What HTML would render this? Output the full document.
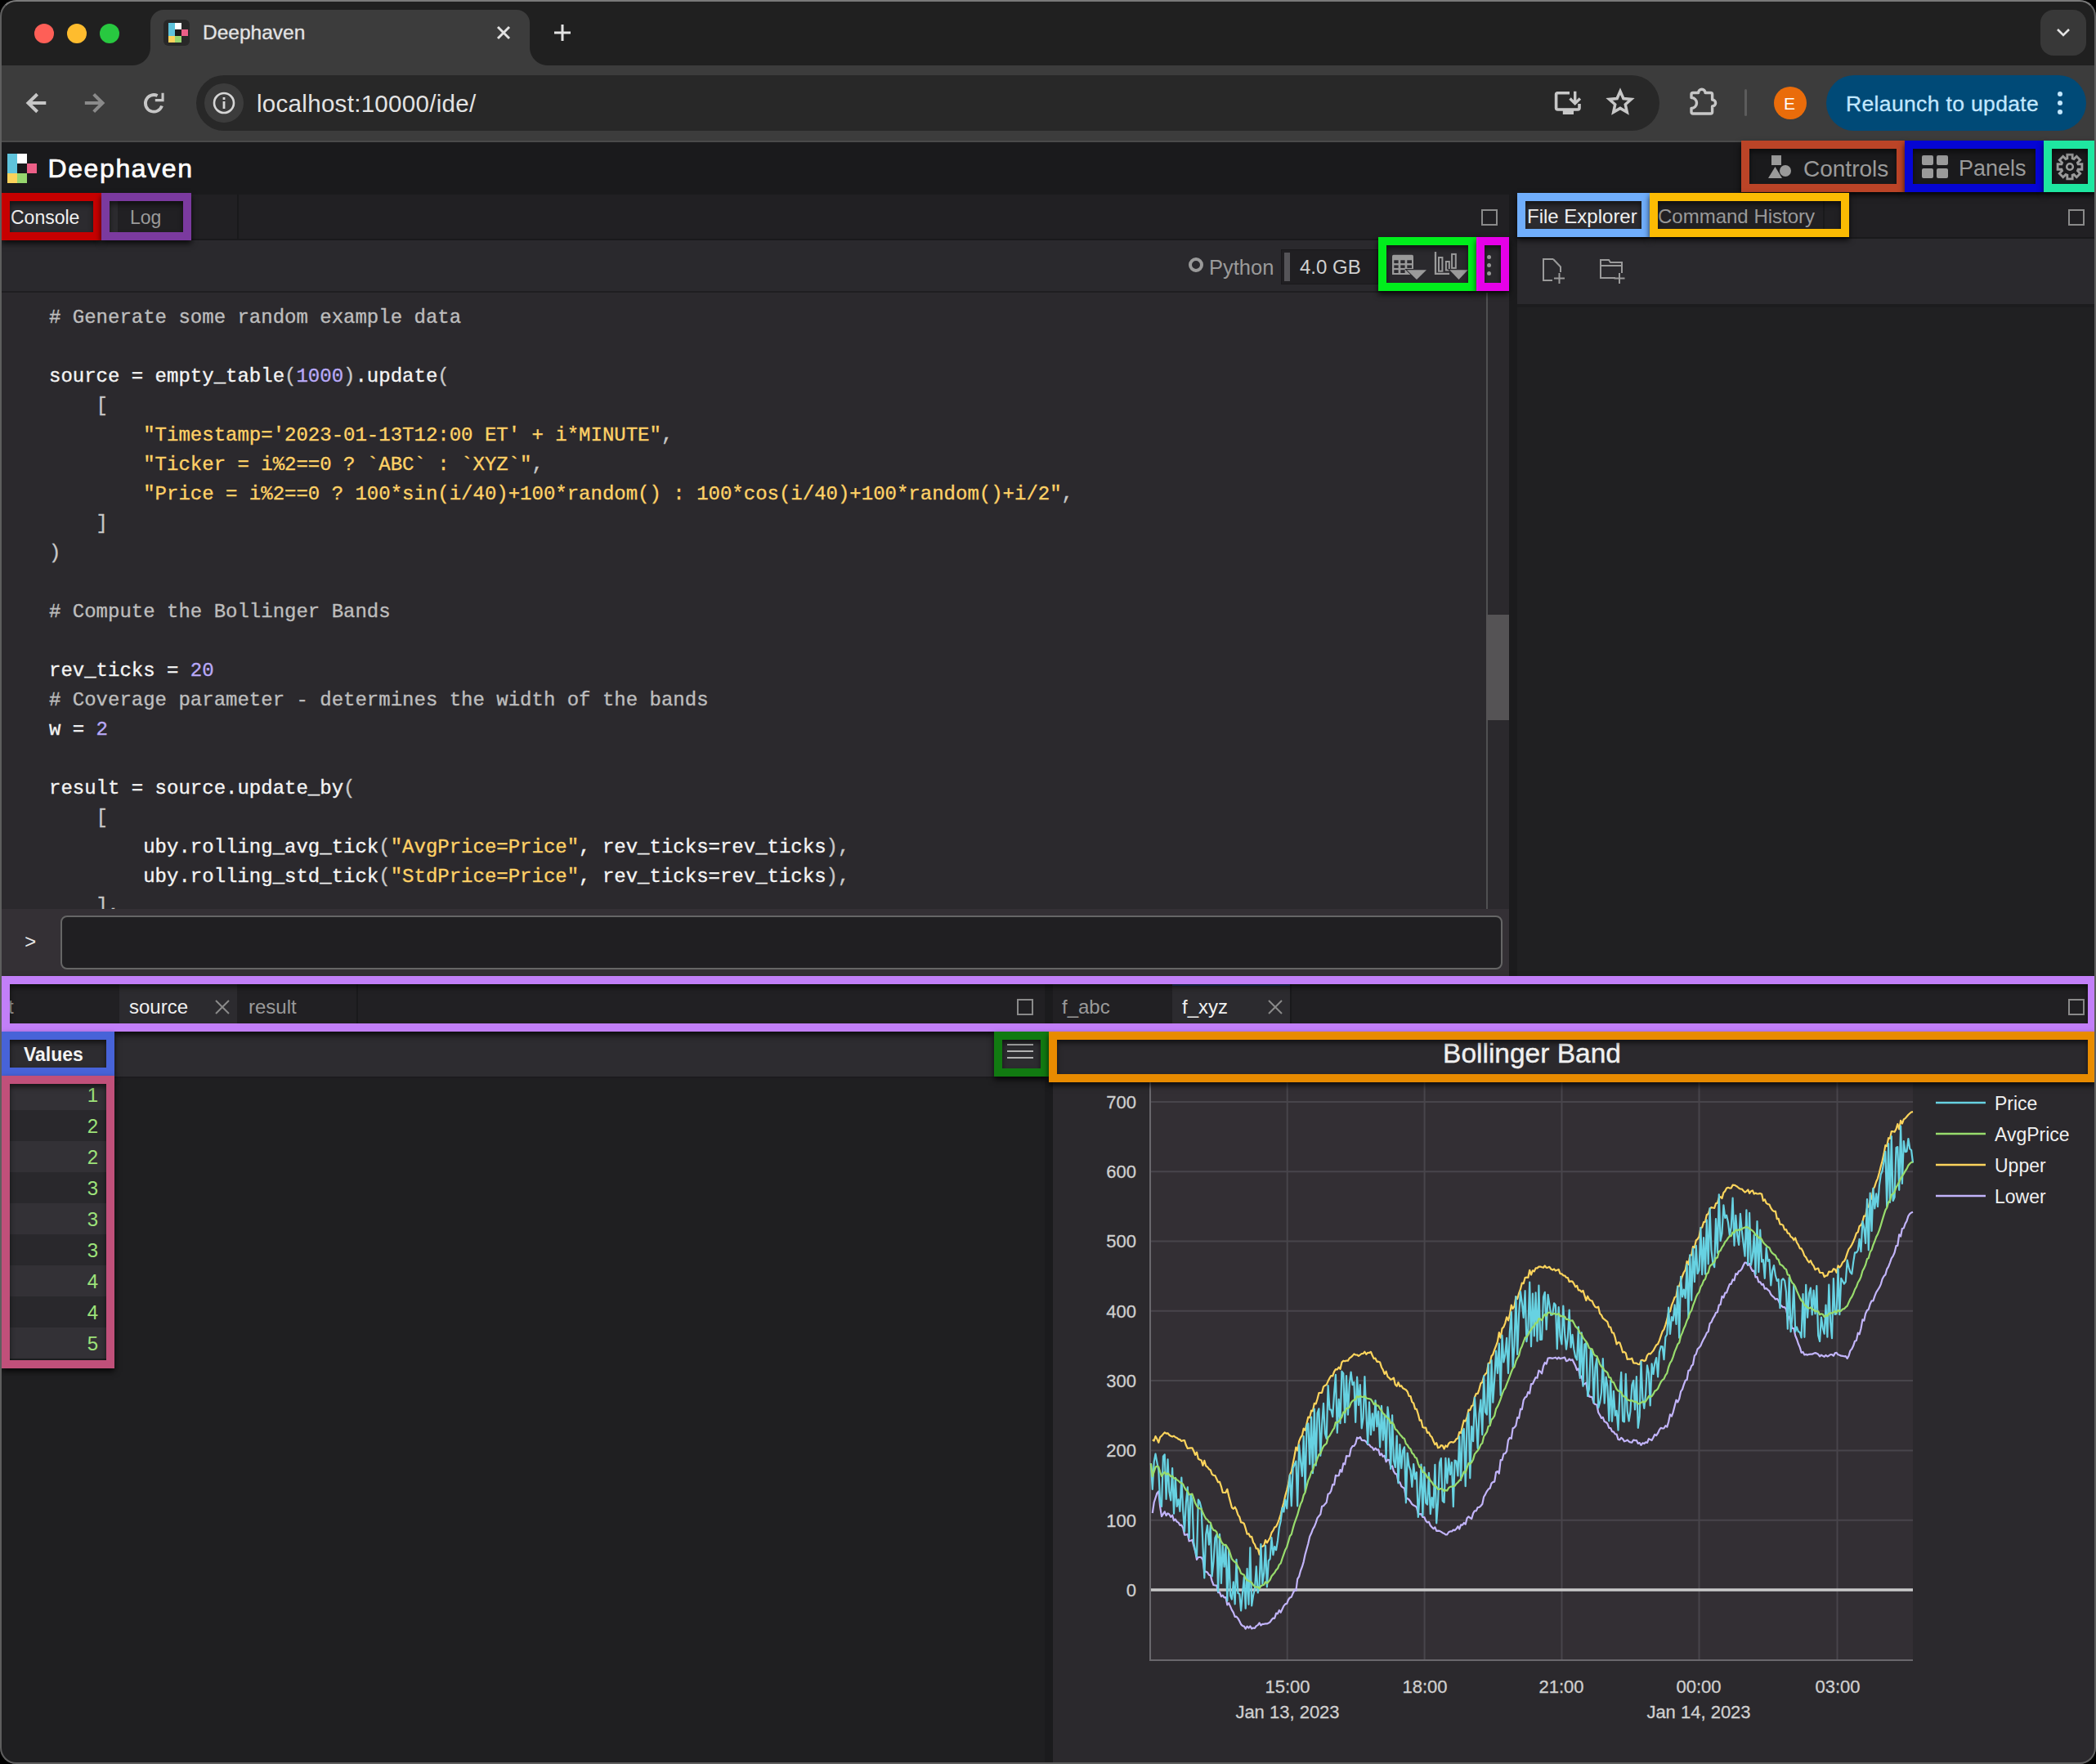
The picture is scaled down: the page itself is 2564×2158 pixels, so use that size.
<!DOCTYPE html>
<html><head><meta charset="utf-8">
<style>
*{box-sizing:border-box;margin:0;padding:0}
html,body{width:2564px;height:2158px;overflow:hidden;background:#000}
body{font-family:"Liberation Sans",sans-serif;position:relative}
.a{position:absolute}
#win{position:absolute;left:0;top:0;width:2564px;height:2158px;border-radius:20px;overflow:hidden;background:#1a1a1c}
#frame{position:absolute;left:0;top:0;width:2564px;height:2158px;border-radius:20px;border:2px solid #5e5e5e;border-top-color:#7a7a7a;pointer-events:none;z-index:50}
.mono{font-family:"Liberation Mono",monospace}
.ann{position:absolute;border:10px solid;background:transparent;box-shadow:0 4px 7px rgba(0,0,0,.75),inset 0 4px 6px rgba(0,0,0,.55);z-index:20}
.txt{position:absolute;white-space:pre;line-height:1}
.cl{position:absolute;left:60px;margin-top:3px;height:36px;line-height:36px;font-size:24px;white-space:pre;-webkit-text-stroke-width:0.35px}
</style></head><body>
<div id="win">
<!-- ===== CHROME TAB STRIP ===== -->
<div class="a" style="left:0;top:0;width:2564px;height:80px;background:#202020"></div>
<div class="a" style="left:42px;top:29px;width:24px;height:24px;border-radius:50%;background:#fe5f57"></div>
<div class="a" style="left:82px;top:29px;width:24px;height:24px;border-radius:50%;background:#febc2e"></div>
<div class="a" style="left:122px;top:29px;width:24px;height:24px;border-radius:50%;background:#28c840"></div>
<!-- active tab -->
<div class="a" style="left:184px;top:12px;width:464px;height:70px;background:#3c3c3c;border-radius:16px 16px 0 0"></div>
<div class="a" style="left:162px;top:58px;width:22px;height:22px;background:radial-gradient(circle at 0 0,#202020 21.5px,#3c3c3c 22.5px)"></div>
<div class="a" style="left:648px;top:58px;width:22px;height:22px;background:radial-gradient(circle at 100% 0,#202020 21.5px,#3c3c3c 22.5px)"></div>
<!-- favicon -->
<div class="a" style="left:200px;top:24px;width:32px;height:32px;border-radius:6px;background:#282828"></div>
<div class="a" style="left:206px;top:28px;width:8px;height:16px;background:#5fc4dc"></div>
<div class="a" style="left:214px;top:28px;width:8px;height:8px;background:#fff"></div>
<div class="a" style="left:214px;top:36px;width:8px;height:8px;background:#1a1a1a"></div>
<div class="a" style="left:222px;top:36px;width:8px;height:8px;background:#ec5f87"></div>
<div class="a" style="left:206px;top:44px;width:8px;height:8px;background:#fbd25b"></div>
<div class="a" style="left:214px;top:44px;width:8px;height:8px;background:#97d66e"></div>
<div class="txt" style="left:248px;top:28px;font-size:24.5px;color:#e3e3e3;-webkit-text-stroke:0.3px #e3e3e3">Deephaven</div>
<svg class="a" style="left:606px;top:30px" width="20" height="20" viewBox="0 0 20 20"><path d="M3 3L17 17M17 3L3 17" stroke="#e3e3e3" stroke-width="2.9"/></svg>
<svg class="a" style="left:676px;top:28px" width="24" height="24" viewBox="0 0 24 24"><path d="M12 2V22M2 12H22" stroke="#e3e3e3" stroke-width="3"/></svg>
<!-- dropdown -->
<div class="a" style="left:2496px;top:12px;width:56px;height:56px;border-radius:16px;background:#383838"></div>
<svg class="a" style="left:2512px;top:30px" width="24" height="20" viewBox="0 0 24 20"><path d="M5 6L12 13L19 6" stroke="#e3e3e3" stroke-width="2.6" fill="none"/></svg>

<!-- ===== CHROME TOOLBAR ===== -->
<div class="a" style="left:0;top:80px;width:2564px;height:94px;background:#3c3c3c;border-bottom:2px solid #4a4a4a"></div>
<svg class="a" style="left:28px;top:110px" width="32" height="32" viewBox="0 0 32 32"><path d="M6 16H28.3M17.6 5.3L6.5 16L17.6 26.7" stroke="#c7c7c7" stroke-width="4" fill="none"/></svg>
<svg class="a" style="left:100px;top:110px" width="32" height="32" viewBox="0 0 32 32"><path d="M3.8 16H26M14.7 5.3L25.5 16L14.7 26.7" stroke="#8a8a8a" stroke-width="4" fill="none"/></svg>
<svg class="a" style="left:172px;top:110px" width="34" height="32" viewBox="0 0 34 32"><path d="M20.6 7A10.3 10.3 0 1 0 26 19.5" stroke="#c7c7c7" stroke-width="3.8" fill="none"/><path d="M17.8 11H25.5V3.8H28.6V14.3H17.8Z" fill="#c7c7c7"/></svg>
<div class="a" style="left:240px;top:92px;width:1790px;height:68px;border-radius:34px;background:#282828"></div>
<div class="a" style="left:250px;top:102px;width:48px;height:48px;border-radius:50%;background:#3c3c3c"></div>
<svg class="a" style="left:260px;top:112px" width="28" height="28" viewBox="0 0 28 28"><circle cx="14" cy="14" r="12" stroke="#d6d6d6" stroke-width="2.6" fill="none"/><rect x="12.6" y="12" width="2.8" height="9" fill="#d6d6d6"/><rect x="12.6" y="7" width="2.8" height="3" fill="#d6d6d6"/></svg>
<div class="txt" style="left:314px;top:112px;font-size:29.5px;letter-spacing:0.3px;color:#e3e3e3">localhost:10000/ide/</div>
<!-- install -->
<svg class="a" style="left:1898px;top:108px" width="40" height="36" viewBox="0 0 40 36"><path d="M22 5.7H7.5Q5.6 5.7 5.6 7.6V24.1Q5.6 26 7.5 26H32.1Q34 26 34 24.1V19" stroke="#c7c7c7" stroke-width="3.6" fill="none"/><rect x="13.8" y="27" width="13.2" height="5" fill="#c7c7c7"/><path d="M28.7 3.8V18M22.5 12.5L28.7 18.7L34.9 12.5" stroke="#c7c7c7" stroke-width="3.4" fill="none"/></svg>
<svg class="a" style="left:1963px;top:106px" width="40" height="40" viewBox="0 0 40 40"><path d="M19.0 5.6L22.9 14.5L32.5 15.4L25.3 21.8L27.3 31.3L19.0 26.4L10.7 31.3L12.7 21.8L5.5 15.4L15.1 14.5Z" stroke="#c7c7c7" stroke-width="3.5" fill="none" stroke-linejoin="miter"/></svg>
<svg class="a" style="left:2064px;top:106px" width="40" height="40" viewBox="0 0 40 40"><path d="M5 9.5Q5 7.5 7 7.5H13.6A4.2 4.2 0 0 1 22 7.5H28.6Q30.6 7.5 30.6 9.5V16A4 4 0 0 1 30.6 24V31Q30.6 33 28.6 33H7Q5 33 5 31V26.5A6.5 6.5 0 0 0 5 13.5Z" stroke="#c7c7c7" stroke-width="3.4" fill="none" stroke-linejoin="round"/></svg>
<div class="a" style="left:2134px;top:109px;width:3px;height:33px;border-radius:2px;background:#5c5c5c"></div>
<div class="a" style="left:2170px;top:106px;width:40px;height:40px;border-radius:50%;background:#ea6c0a"></div>
<div class="txt" style="left:2182px;top:116px;font-size:21px;color:#fff">E</div>
<div class="a" style="left:2234px;top:92px;width:318px;height:68px;border-radius:34px;background:#004a77"></div>
<div class="txt" style="left:2258px;top:113.5px;font-size:26.5px;letter-spacing:0.35px;color:#c2e7ff;-webkit-text-stroke:0.3px #c2e7ff">Relaunch to update</div>
<div class="a" style="left:2517px;top:112px;width:6px;height:6px;border-radius:50%;background:#c2e7ff"></div>
<div class="a" style="left:2517px;top:123px;width:6px;height:6px;border-radius:50%;background:#c2e7ff"></div>
<div class="a" style="left:2517px;top:134px;width:6px;height:6px;border-radius:50%;background:#c2e7ff"></div>

<!-- ===== DH HEADER ===== -->
<div class="a" style="left:0;top:174px;width:2564px;height:64px;background:#1a1a1c"></div>
<div class="a" style="left:9px;top:188px;width:12px;height:24px;background:#5fc4dc"></div>
<div class="a" style="left:21px;top:188px;width:12px;height:12px;background:#fff"></div>
<div class="a" style="left:33px;top:200px;width:12px;height:12px;background:#ec5f87"></div>
<div class="a" style="left:9px;top:212px;width:12px;height:12px;background:#fbd25b"></div>
<div class="a" style="left:21px;top:212px;width:12px;height:12px;background:#97d66e"></div>
<div class="txt" style="left:58.5px;top:189.5px;font-size:32px;color:#fff;letter-spacing:1.6px;-webkit-text-stroke:0.7px #fff">Deephaven</div>


<!-- DH header right -->
<svg class="a" style="left:2163px;top:190px" width="30" height="28" viewBox="0 0 30 28"><rect x="4" y="0" width="12" height="12" fill="#9a9a9a"/><path d="M0 28L8.5 14L17 28Z" fill="#9a9a9a"/><circle cx="21" cy="19" r="7" fill="#9a9a9a"/></svg>
<div class="txt" style="left:2206px;top:193px;font-size:28px;color:#9a9a9a">Controls</div>
<svg class="a" style="left:2351px;top:190px" width="32" height="28" viewBox="0 0 32 28"><rect x="0" y="0" width="14" height="12" rx="2" fill="#9a9a9a"/><rect x="18" y="0" width="14" height="12" rx="2" fill="#9a9a9a"/><rect x="0" y="16" width="14" height="12" rx="2" fill="#9a9a9a"/><rect x="18" y="16" width="14" height="12" rx="2" fill="#9a9a9a"/></svg>
<div class="txt" style="left:2396px;top:193px;font-size:27px;color:#9a9a9a">Panels</div>
<svg class="a" style="left:2514px;top:186px" width="36" height="36" viewBox="0 0 36 36"><path d="M14.9 7.9L14.8 3.1L21.2 3.1L21.1 7.9L23.0 8.6L26.3 5.3L30.7 9.7L27.4 13.0L28.1 14.9L32.9 14.8L32.9 21.2L28.1 21.1L27.4 23.0L30.7 26.3L26.3 30.7L23.0 27.4L21.1 28.1L21.2 32.9L14.8 32.9L14.9 28.1L13.0 27.4L9.7 30.7L5.3 26.3L8.6 23.0L7.9 21.1L3.1 21.2L3.1 14.8L7.9 14.9L8.6 13.0L5.3 9.7L9.7 5.3L13.0 8.6Z" stroke="#9a9a9a" stroke-width="2.8" fill="none" stroke-linejoin="miter"/><circle cx="18" cy="18" r="3.8" stroke="#9a9a9a" stroke-width="2.6" fill="none"/></svg>

<!-- ===== CONSOLE PANEL ===== -->
<div class="a" style="left:0;top:238px;width:1846px;height:56px;background:#212023;border-bottom:2px solid #19191b"></div>
<div class="a" style="left:0;top:238px;width:144px;height:54px;background:#2c2b2f"></div>
<div class="a" style="left:290px;top:238px;width:2px;height:54px;background:#19191b"></div>
<div class="txt" style="left:13px;top:255px;font-size:23px;color:#f0f0f0">Console</div>
<div class="txt" style="left:159px;top:255px;font-size:23px;color:#9a9a9a">Log</div>
<div class="a" style="left:1812px;top:256px;width:20px;height:20px;border:2px solid #8a8a8a"></div>
<!-- toolbar -->
<div class="a" style="left:0;top:294px;width:1846px;height:64px;background:#2a292d;border-bottom:2px solid #1f1e21"></div>
<div class="a" style="left:1454px;top:315px;width:18px;height:18px;border-radius:50%;border:4px solid #9a9a9a"></div>
<div class="txt" style="left:1479px;top:314.5px;font-size:25.5px;color:#9a9a9a">Python</div>
<div class="a" style="left:1567px;top:305px;width:119px;height:43px;background:#201f22;border:1px solid #19181b"></div>
<div class="a" style="left:1571px;top:309px;width:7px;height:35px;background:#555458"></div>
<div class="txt" style="left:1590px;top:314.5px;font-size:24px;color:#d0d0d0">4.0 GB</div>
<svg class="a" style="left:1700px;top:306px" width="100" height="40" viewBox="0 0 100 40"><path d="M3 7.5Q3 5.8 4.7 5.8H27.3Q29 5.8 29 7.5V30H3Z" fill="#9a9a9a"/><g fill="#2b2a2e"><rect x="5.3" y="12.3" width="5.3" height="3.8"/><rect x="13.3" y="12.3" width="5.3" height="3.8"/><rect x="21.3" y="12.3" width="5.7" height="3.8"/><rect x="5.3" y="18.4" width="5.3" height="3.5"/><rect x="13.3" y="18.4" width="5.3" height="3.5"/><rect x="21.3" y="18.4" width="5.7" height="3.5"/><rect x="5.3" y="24.2" width="5.3" height="3.8"/><rect x="13.3" y="24.2" width="5.3" height="3.8"/></g><path d="M20.9 24.2H45L33 36Z" fill="#9a9a9a" stroke="#2b2a2e" stroke-width="2.2" paint-order="stroke"/><path d="M56 2V28.8H73" stroke="#9a9a9a" stroke-width="2.3" fill="none"/><rect x="60" y="9" width="4.4" height="16.7" stroke="#9a9a9a" stroke-width="2" fill="none"/><rect x="68.9" y="14" width="3.9" height="10.5" stroke="#9a9a9a" stroke-width="2" fill="none"/><rect x="76.1" y="4.9" width="4.7" height="17" stroke="#9a9a9a" stroke-width="2" fill="none"/><path d="M73.2 24.2H95.7L84.5 36Z" fill="#9a9a9a" stroke="#2b2a2e" stroke-width="2.2" paint-order="stroke"/></svg>
<div class="a" style="left:1819px;top:312px;width:5px;height:5px;border-radius:50%;background:#9a9a9a"></div>
<div class="a" style="left:1819px;top:322px;width:5px;height:5px;border-radius:50%;background:#9a9a9a"></div>
<div class="a" style="left:1819px;top:332px;width:5px;height:5px;border-radius:50%;background:#9a9a9a"></div>
<!-- code -->
<div class="a" style="left:0;top:358px;width:1846px;height:754px;background:#2b292d;overflow:hidden" id="code">
</div>
<div class="a mono" style="left:0;top:358px;width:1818px;height:754px;overflow:hidden">
<div style="position:relative;top:-358px">
<div class="cl" style="top:368px"><span style="color:#bdbdbd"># Generate some random example data</span></div>
<div class="cl" style="top:404px"></div>
<div class="cl" style="top:440px"><span style="color:#f4f4f4">source = empty_table</span><span style="color:#c8c8c8">(</span><span style="color:#b8a8f6">1000</span><span style="color:#c8c8c8">)</span><span style="color:#f4f4f4">.update</span><span style="color:#c8c8c8">(</span></div>
<div class="cl" style="top:476px"><span style="color:#f4f4f4">    </span><span style="color:#c8c8c8">[</span></div>
<div class="cl" style="top:512px"><span style="color:#f4f4f4">        </span><span style="color:#ffd166">&quot;Timestamp=&#x27;2023-01-13T12:00 ET&#x27; + i*MINUTE&quot;</span><span style="color:#c8c8c8">,</span></div>
<div class="cl" style="top:548px"><span style="color:#f4f4f4">        </span><span style="color:#ffd166">&quot;Ticker = i%2==0 ? `ABC` : `XYZ`&quot;</span><span style="color:#c8c8c8">,</span></div>
<div class="cl" style="top:584px"><span style="color:#f4f4f4">        </span><span style="color:#ffd166">&quot;Price = i%2==0 ? 100*sin(i/40)+100*random() : 100*cos(i/40)+100*random()+i/2&quot;</span><span style="color:#c8c8c8">,</span></div>
<div class="cl" style="top:620px"><span style="color:#f4f4f4">    </span><span style="color:#c8c8c8">]</span></div>
<div class="cl" style="top:656px"><span style="color:#c8c8c8">)</span></div>
<div class="cl" style="top:692px"></div>
<div class="cl" style="top:728px"><span style="color:#bdbdbd"># Compute the Bollinger Bands</span></div>
<div class="cl" style="top:764px"></div>
<div class="cl" style="top:800px"><span style="color:#f4f4f4">rev_ticks = </span><span style="color:#b8a8f6">20</span></div>
<div class="cl" style="top:836px"><span style="color:#bdbdbd"># Coverage parameter - determines the width of the bands</span></div>
<div class="cl" style="top:872px"><span style="color:#f4f4f4">w = </span><span style="color:#b8a8f6">2</span></div>
<div class="cl" style="top:908px"></div>
<div class="cl" style="top:944px"><span style="color:#f4f4f4">result = source.update_by</span><span style="color:#c8c8c8">(</span></div>
<div class="cl" style="top:980px"><span style="color:#f4f4f4">    </span><span style="color:#c8c8c8">[</span></div>
<div class="cl" style="top:1016px"><span style="color:#f4f4f4">        uby.rolling_avg_tick</span><span style="color:#c8c8c8">(</span><span style="color:#ffd166">&quot;AvgPrice=Price&quot;</span><span style="color:#f4f4f4">, rev_ticks=rev_ticks</span><span style="color:#c8c8c8">),</span></div>
<div class="cl" style="top:1052px"><span style="color:#f4f4f4">        uby.rolling_std_tick</span><span style="color:#c8c8c8">(</span><span style="color:#ffd166">&quot;StdPrice=Price&quot;</span><span style="color:#f4f4f4">, rev_ticks=rev_ticks</span><span style="color:#c8c8c8">),</span></div>
<div class="cl" style="top:1088px"><span style="color:#f4f4f4">    </span><span style="color:#c8c8c8">],</span></div>
</div></div>
<div class="a" style="left:1818px;top:358px;width:2px;height:754px;background:#505052"></div>
<div class="a" style="left:1818px;top:752px;width:28px;height:129px;background:#555355"></div>
<!-- input row -->
<div class="a" style="left:0;top:1112px;width:1846px;height:82px;background:#343035"></div>
<div class="txt mono" style="left:30px;top:1142px;font-size:24px;color:#e8e8e8">&gt;</div>
<div class="a" style="left:74px;top:1120px;width:1764px;height:66px;border-radius:8px;border:2px solid #666;background:#201f22"></div>
<div class="a" style="left:1846px;top:238px;width:10px;height:956px;background:#1b1b1d"></div>

<!-- ===== RIGHT PANEL ===== -->
<div class="a" style="left:1856px;top:238px;width:708px;height:54px;background:#212023;border-bottom:2px solid #19191b"></div>
<div class="a" style="left:1856px;top:238px;width:162px;height:52px;background:#2c2b2f"></div>
<div class="a" style="left:2230px;top:238px;width:2px;height:52px;background:#19191b"></div>
<div class="txt" style="left:1868px;top:253px;font-size:24px;color:#f0f0f0">File Explorer</div>
<div class="txt" style="left:2028px;top:253px;font-size:24px;color:#9a9a9a">Command History</div>
<div class="a" style="left:2530px;top:256px;width:20px;height:20px;border:2px solid #8a8a8a"></div>
<div class="a" style="left:1856px;top:292px;width:708px;height:80px;background:#2a292d"></div>
<svg class="a" style="left:1884px;top:314px" width="36" height="36" viewBox="0 0 36 36"><path d="M16 3H4V29H15" stroke="#9a9a9a" stroke-width="2" fill="none"/><path d="M16 3L25 12.5V19" stroke="#9a9a9a" stroke-width="2" fill="none"/><path d="M23.5 20V33M17 26.5H30" stroke="#9a9a9a" stroke-width="2"/></svg>
<svg class="a" style="left:1954px;top:314px" width="40" height="36" viewBox="0 0 40 36"><path d="M22 26H4V4H14L16 7H30V20" stroke="#9a9a9a" stroke-width="2" fill="none"/><path d="M4 11H30" stroke="#9a9a9a" stroke-width="2"/><path d="M27 20V33M20.5 26.5H33.5" stroke="#9a9a9a" stroke-width="2"/></svg>
<div class="a" style="left:1856px;top:372px;width:708px;height:4px;background:#1c1c1e"></div>
<div class="a" style="left:1856px;top:376px;width:708px;height:818px;background:#202022"></div>


<!-- ===== BOTTOM LEFT TABLE PANEL ===== -->
<div class="a" style="left:0;top:1194px;width:1278px;height:964px;background:#1f1f21"></div>
<div class="a" style="left:0;top:1196px;width:1278px;height:58px;background:#212023;border-bottom:2px solid #19191b"></div>
<div class="a" style="left:146px;top:1196px;width:144px;height:56px;background:#2c2b2f"></div>
<div class="a" style="left:436px;top:1196px;width:2px;height:56px;background:#19191b"></div>
<div class="txt" style="left:10px;top:1220px;font-size:24px;color:#9a9a9a">t</div>
<div class="txt" style="left:158px;top:1220px;font-size:24px;color:#f0f0f0">source</div>
<svg class="a" style="left:262px;top:1222px" width="20" height="20" viewBox="0 0 20 20"><path d="M2 2L18 18M18 2L2 18" stroke="#8a8a8a" stroke-width="2"/></svg>
<div class="txt" style="left:304px;top:1220px;font-size:24px;color:#9a9a9a">result</div>
<div class="a" style="left:1244px;top:1222px;width:20px;height:20px;border:2px solid #8a8a8a"></div>
<div class="a" style="left:0;top:1262px;width:1278px;height:57px;background:#2d2c30;border-bottom:2px solid #1c1b1e"></div>
<div class="txt" style="left:29px;top:1279px;font-size:23px;font-weight:bold;color:#f4f4f4">Values</div>
<div class="a" style="left:1232px;top:1277px;width:32px;height:2px;background:#b0b0b0"></div>
<div class="a" style="left:1232px;top:1285px;width:32px;height:2px;background:#b0b0b0"></div>
<div class="a" style="left:1232px;top:1293px;width:32px;height:2px;background:#b0b0b0"></div>
<div class="a" style="left:0;top:1320px;width:136px;height:38px;background:#333136"></div>
<div class="txt" style="left:0;top:1328px;width:120px;text-align:right;font-size:24px;color:#9de27a">1</div>
<div class="a" style="left:0;top:1358px;width:136px;height:38px;background:#29282c"></div>
<div class="txt" style="left:0;top:1366px;width:120px;text-align:right;font-size:24px;color:#9de27a">2</div>
<div class="a" style="left:0;top:1396px;width:136px;height:38px;background:#333136"></div>
<div class="txt" style="left:0;top:1404px;width:120px;text-align:right;font-size:24px;color:#9de27a">2</div>
<div class="a" style="left:0;top:1434px;width:136px;height:38px;background:#29282c"></div>
<div class="txt" style="left:0;top:1442px;width:120px;text-align:right;font-size:24px;color:#9de27a">3</div>
<div class="a" style="left:0;top:1472px;width:136px;height:38px;background:#333136"></div>
<div class="txt" style="left:0;top:1480px;width:120px;text-align:right;font-size:24px;color:#9de27a">3</div>
<div class="a" style="left:0;top:1510px;width:136px;height:38px;background:#29282c"></div>
<div class="txt" style="left:0;top:1518px;width:120px;text-align:right;font-size:24px;color:#9de27a">3</div>
<div class="a" style="left:0;top:1548px;width:136px;height:38px;background:#333136"></div>
<div class="txt" style="left:0;top:1556px;width:120px;text-align:right;font-size:24px;color:#9de27a">4</div>
<div class="a" style="left:0;top:1586px;width:136px;height:38px;background:#29282c"></div>
<div class="txt" style="left:0;top:1594px;width:120px;text-align:right;font-size:24px;color:#9de27a">4</div>
<div class="a" style="left:0;top:1624px;width:136px;height:38px;background:#333136"></div>
<div class="txt" style="left:0;top:1632px;width:120px;text-align:right;font-size:24px;color:#9de27a">5</div>

<div class="a" style="left:1278px;top:1194px;width:10px;height:964px;background:#1b1b1d"></div>

<!-- ===== CHART PANEL ===== -->
<div class="a" style="left:1288px;top:1196px;width:1276px;height:58px;background:#212023;border-bottom:2px solid #19191b"></div>
<div class="a" style="left:1434px;top:1204px;width:144px;height:48px;background:#2c2b2f;border-top:2px solid #1e3a6e"></div>
<div class="a" style="left:1578px;top:1196px;width:2px;height:56px;background:#19191b"></div>
<div class="txt" style="left:1299px;top:1220px;font-size:24px;color:#9a9a9a">f_abc</div>
<div class="txt" style="left:1446px;top:1220px;font-size:24px;color:#f0f0f0">f_xyz</div>
<svg class="a" style="left:1550px;top:1222px" width="20" height="20" viewBox="0 0 20 20"><path d="M2 2L18 18M18 2L2 18" stroke="#8a8a8a" stroke-width="2"/></svg>
<div class="a" style="left:2530px;top:1222px;width:20px;height:20px;border:2px solid #8a8a8a"></div>
<div class="a" style="left:1288px;top:1262px;width:1276px;height:896px;background:#2b292d"></div>
<div class="a" style="left:1407px;top:1320px;width:933px;height:711px;background:#332f34"></div>
<div class="txt" style="left:1574px;width:600px;text-align:center;top:1272px;font-size:33.5px;color:#f0f0f0;-webkit-text-stroke:0.4px #f0f0f0">Bollinger Band</div>
<svg class="a" style="left:0;top:0" width="2564" height="2158" viewBox="0 0 2564 2158">
<path d="M1407 1859.7H2340" stroke="#48454b" stroke-width="2"/><path d="M1407 1774.4H2340" stroke="#48454b" stroke-width="2"/><path d="M1407 1689.1H2340" stroke="#48454b" stroke-width="2"/><path d="M1407 1603.8H2340" stroke="#48454b" stroke-width="2"/><path d="M1407 1518.5H2340" stroke="#48454b" stroke-width="2"/><path d="M1407 1433.2H2340" stroke="#48454b" stroke-width="2"/><path d="M1407 1347.9H2340" stroke="#48454b" stroke-width="2"/><path d="M1574.7 1324V2030" stroke="#48454b" stroke-width="2"/><path d="M1742.6 1324V2030" stroke="#48454b" stroke-width="2"/><path d="M1910.5 1324V2030" stroke="#48454b" stroke-width="2"/><path d="M2078.5 1324V2030" stroke="#48454b" stroke-width="2"/><path d="M2247.5 1324V2030" stroke="#48454b" stroke-width="2"/>
<path d="M1407 1945H2340" stroke="#c9c9c9" stroke-width="3.6"/>
<path d="M1407 1324V2031H2340" stroke="#69676c" stroke-width="2" fill="none"/>
<g fill="none" stroke-width="2.2" stroke-linejoin="round">
<path d="M1409.8,1851.0L1411.7,1838.0L1413.5,1832.5L1415.4,1826.7L1417.3,1824.4L1419.1,1842.9L1421.0,1855.2L1422.9,1852.1L1424.7,1849.3L1426.6,1854.0L1428.5,1851.3L1430.3,1852.5L1432.2,1855.8L1434.1,1853.6L1436.0,1860.3L1437.8,1858.6L1439.7,1861.6L1441.6,1862.6L1443.4,1865.8L1445.3,1865.7L1447.2,1869.1L1449.0,1877.6L1450.9,1877.6L1452.8,1876.8L1454.6,1885.3L1456.5,1884.7L1458.4,1884.0L1460.2,1890.8L1462.1,1897.6L1464.0,1908.0L1465.8,1905.0L1467.7,1905.0L1469.6,1905.3L1471.4,1908.2L1473.3,1922.3L1475.2,1922.7L1477.0,1923.6L1478.9,1926.6L1480.8,1927.2L1482.6,1934.1L1484.5,1939.0L1486.4,1939.5L1488.3,1939.5L1490.1,1948.2L1492.0,1948.0L1493.9,1953.2L1495.7,1951.6L1497.6,1954.3L1499.5,1954.0L1501.3,1963.4L1503.2,1961.1L1505.1,1965.4L1506.9,1969.7L1508.8,1972.7L1510.7,1978.0L1512.5,1977.7L1514.4,1979.9L1516.3,1983.3L1518.1,1987.1L1520.0,1989.0L1521.9,1989.6L1523.7,1992.6L1525.6,1989.6L1527.5,1991.6L1529.3,1989.4L1531.2,1992.4L1533.1,1991.5L1534.9,1991.8L1536.8,1989.1L1538.7,1988.1L1540.6,1985.3L1542.4,1988.4L1544.3,1986.9L1546.2,1986.8L1548.0,1986.4L1549.9,1986.4L1551.8,1985.6L1553.6,1984.4L1555.5,1981.6L1557.4,1979.6L1559.2,1979.8L1561.1,1973.6L1563.0,1974.2L1564.8,1969.8L1566.7,1972.5L1568.6,1968.5L1570.4,1964.6L1572.3,1962.4L1574.2,1961.8L1576.0,1957.0L1577.9,1954.5L1579.8,1953.7L1581.6,1949.2L1583.5,1945.4L1585.4,1945.8L1587.2,1931.7L1589.1,1928.7L1591.0,1921.5L1592.9,1916.7L1594.7,1910.6L1596.6,1901.6L1598.5,1894.8L1600.3,1888.2L1602.2,1879.7L1604.1,1875.8L1605.9,1870.8L1607.8,1867.6L1609.7,1862.9L1611.5,1857.1L1613.4,1854.7L1615.3,1852.6L1617.1,1842.7L1619.0,1842.2L1620.9,1839.9L1622.7,1837.9L1624.6,1827.7L1626.5,1827.0L1628.3,1823.7L1630.2,1816.0L1632.1,1816.3L1633.9,1804.8L1635.8,1805.5L1637.7,1805.2L1639.5,1798.0L1641.4,1800.6L1643.3,1790.3L1645.2,1791.4L1647.0,1781.2L1648.9,1781.4L1650.8,1781.4L1652.6,1772.3L1654.5,1769.2L1656.4,1768.8L1658.2,1766.2L1660.1,1758.7L1662.0,1759.7L1663.8,1758.1L1665.7,1761.8L1667.6,1762.1L1669.4,1762.2L1671.3,1763.9L1673.2,1767.1L1675.0,1767.3L1676.9,1769.9L1678.8,1770.7L1680.6,1773.9L1682.5,1771.6L1684.4,1773.7L1686.2,1773.4L1688.1,1780.2L1690.0,1778.3L1691.8,1781.9L1693.7,1780.8L1695.6,1788.3L1697.5,1785.7L1699.3,1786.1L1701.2,1794.2L1703.1,1793.5L1704.9,1799.9L1706.8,1802.9L1708.7,1803.6L1710.5,1813.0L1712.4,1813.3L1714.3,1818.3L1716.1,1819.6L1718.0,1820.7L1719.9,1832.3L1721.7,1833.3L1723.6,1834.5L1725.5,1837.1L1727.3,1840.2L1729.2,1841.5L1731.1,1842.4L1732.9,1843.8L1734.8,1851.2L1736.7,1852.4L1738.5,1852.2L1740.4,1856.0L1742.3,1856.0L1744.2,1860.6L1746.0,1862.5L1747.9,1861.8L1749.8,1866.2L1751.6,1868.3L1753.5,1870.3L1755.4,1868.3L1757.2,1872.8L1759.1,1872.6L1761.0,1872.9L1762.8,1873.9L1764.7,1875.2L1766.6,1876.0L1768.4,1877.4L1770.3,1877.3L1772.2,1874.2L1774.0,1873.4L1775.9,1873.5L1777.8,1871.6L1779.6,1872.1L1781.5,1870.3L1783.4,1867.3L1785.2,1870.5L1787.1,1865.3L1789.0,1865.7L1790.8,1863.0L1792.7,1864.7L1794.6,1857.3L1796.5,1855.4L1798.3,1856.8L1800.2,1858.0L1802.1,1851.4L1803.9,1848.3L1805.8,1848.4L1807.7,1844.0L1809.5,1843.9L1811.4,1842.3L1813.3,1840.0L1815.1,1831.3L1817.0,1828.1L1818.9,1824.3L1820.7,1821.8L1822.6,1820.8L1824.5,1814.6L1826.3,1813.1L1828.2,1812.6L1830.1,1800.9L1831.9,1799.9L1833.8,1802.7L1835.7,1786.0L1837.5,1786.2L1839.4,1778.5L1841.3,1778.1L1843.1,1775.3L1845.0,1761.9L1846.9,1758.9L1848.8,1759.9L1850.6,1747.3L1852.5,1746.4L1854.4,1744.0L1856.2,1734.1L1858.1,1734.8L1860.0,1723.7L1861.8,1724.1L1863.7,1713.1L1865.6,1709.6L1867.4,1708.7L1869.3,1703.0L1871.2,1704.7L1873.0,1693.0L1874.9,1693.1L1876.8,1688.7L1878.6,1685.1L1880.5,1685.6L1882.4,1676.6L1884.2,1677.8L1886.1,1680.3L1888.0,1671.2L1889.8,1667.0L1891.7,1668.6L1893.6,1661.6L1895.4,1661.2L1897.3,1661.4L1899.2,1661.8L1901.1,1661.2L1902.9,1660.7L1904.8,1662.5L1906.7,1660.6L1908.5,1662.1L1910.4,1661.6L1912.3,1661.1L1914.1,1660.6L1916.0,1665.2L1917.9,1664.5L1919.7,1662.5L1921.6,1664.1L1923.5,1663.3L1925.3,1666.9L1927.2,1670.8L1929.1,1676.0L1930.9,1674.4L1932.8,1683.5L1934.7,1683.5L1936.5,1693.9L1938.4,1693.0L1940.3,1691.5L1942.1,1702.5L1944.0,1708.4L1945.9,1708.8L1947.7,1709.4L1949.6,1716.7L1951.5,1718.0L1953.4,1718.5L1955.2,1728.0L1957.1,1731.1L1959.0,1734.9L1960.8,1733.8L1962.7,1739.1L1964.6,1739.9L1966.4,1741.6L1968.3,1746.8L1970.2,1747.0L1972.0,1751.1L1973.9,1751.6L1975.8,1754.4L1977.6,1754.6L1979.5,1761.0L1981.4,1761.3L1983.2,1758.8L1985.1,1760.4L1987.0,1763.3L1988.8,1762.7L1990.7,1761.6L1992.6,1763.6L1994.4,1764.5L1996.3,1764.6L1998.2,1761.5L2000.0,1762.1L2001.9,1762.1L2003.8,1765.9L2005.7,1765.1L2007.5,1767.8L2009.4,1765.3L2011.3,1766.1L2013.1,1764.4L2015.0,1765.0L2016.9,1760.1L2018.7,1761.1L2020.6,1762.0L2022.5,1758.5L2024.3,1754.8L2026.2,1756.2L2028.1,1753.2L2029.9,1749.1L2031.8,1746.8L2033.7,1747.5L2035.5,1747.3L2037.4,1744.2L2039.3,1745.6L2041.1,1739.5L2043.0,1730.4L2044.9,1732.6L2046.7,1727.6L2048.6,1720.1L2050.5,1712.7L2052.3,1715.4L2054.2,1711.3L2056.1,1702.4L2058.0,1699.6L2059.8,1693.9L2061.7,1688.8L2063.6,1688.0L2065.4,1676.8L2067.3,1676.1L2069.2,1670.8L2071.0,1669.3L2072.9,1658.5L2074.8,1656.4L2076.6,1650.3L2078.5,1648.7L2080.4,1646.4L2082.2,1641.9L2084.1,1638.1L2086.0,1634.9L2087.8,1630.6L2089.7,1629.0L2091.6,1619.1L2093.4,1617.7L2095.3,1613.2L2097.2,1610.2L2099.0,1606.0L2100.9,1605.2L2102.8,1596.6L2104.6,1596.0L2106.5,1585.9L2108.4,1587.5L2110.3,1581.6L2112.1,1581.3L2114.0,1575.9L2115.9,1570.9L2117.7,1570.9L2119.6,1565.4L2121.5,1566.3L2123.3,1558.2L2125.2,1559.0L2127.1,1555.0L2128.9,1554.7L2130.8,1552.2L2132.7,1547.8L2134.5,1544.5L2136.4,1544.8L2138.3,1547.9L2140.1,1545.9L2142.0,1551.4L2143.9,1555.0L2145.7,1554.6L2147.6,1562.5L2149.5,1562.2L2151.3,1568.4L2153.2,1568.3L2155.1,1571.6L2156.9,1571.0L2158.8,1576.6L2160.7,1576.0L2162.6,1577.9L2164.4,1579.3L2166.3,1583.6L2168.2,1585.7L2170.0,1587.1L2171.9,1589.5L2173.8,1588.8L2175.6,1591.0L2177.5,1595.9L2179.4,1597.6L2181.2,1599.2L2183.1,1599.2L2185.0,1601.9L2186.8,1610.4L2188.7,1610.8L2190.6,1619.0L2192.4,1625.0L2194.3,1625.0L2196.2,1634.0L2198.0,1638.2L2199.9,1644.0L2201.8,1648.4L2203.6,1654.8L2205.5,1654.0L2207.4,1657.5L2209.2,1656.9L2211.1,1657.6L2213.0,1656.8L2214.9,1656.7L2216.7,1656.7L2218.6,1655.7L2220.5,1655.1L2222.3,1655.6L2224.2,1656.8L2226.1,1659.4L2227.9,1657.6L2229.8,1658.8L2231.7,1659.8L2233.5,1657.8L2235.4,1659.5L2237.3,1658.5L2239.1,1657.0L2241.0,1657.1L2242.9,1658.7L2244.7,1655.4L2246.6,1654.8L2248.5,1657.3L2250.3,1657.7L2252.2,1658.7L2254.1,1658.9L2255.9,1659.3L2257.8,1659.1L2259.7,1661.9L2261.5,1658.7L2263.4,1652.4L2265.3,1650.2L2267.2,1646.3L2269.0,1640.7L2270.9,1639.9L2272.8,1630.7L2274.6,1632.3L2276.5,1625.2L2278.4,1614.4L2280.2,1615.7L2282.1,1606.9L2284.0,1603.0L2285.8,1601.8L2287.7,1595.2L2289.6,1591.3L2291.4,1591.3L2293.3,1585.6L2295.2,1580.8L2297.0,1578.1L2298.9,1575.2L2300.8,1571.1L2302.6,1564.8L2304.5,1561.3L2306.4,1559.4L2308.2,1552.7L2310.1,1549.7L2312.0,1544.6L2313.8,1539.3L2315.7,1536.6L2317.6,1532.3L2319.5,1524.2L2321.3,1523.9L2323.2,1510.3L2325.1,1512.6L2326.9,1503.0L2328.8,1502.5L2330.7,1496.9L2332.5,1493.7L2334.4,1487.7L2336.3,1484.9L2338.1,1483.5L2340.0,1482.8" stroke="#c2b4fa"/>
<path d="M1409.8,1761.4L1411.7,1762.5L1413.5,1757.1L1415.4,1760.6L1417.3,1764.7L1419.1,1758.3L1421.0,1756.6L1422.9,1754.4L1424.7,1752.4L1426.6,1753.7L1428.5,1753.3L1430.3,1755.5L1432.2,1756.7L1434.1,1757.6L1436.0,1756.7L1437.8,1758.3L1439.7,1759.0L1441.6,1760.6L1443.4,1761.1L1445.3,1763.0L1447.2,1762.2L1449.0,1762.2L1450.9,1768.1L1452.8,1771.9L1454.6,1771.6L1456.5,1771.3L1458.4,1771.3L1460.2,1774.9L1462.1,1779.9L1464.0,1776.6L1465.8,1784.5L1467.7,1785.8L1469.6,1786.5L1471.4,1793.0L1473.3,1786.8L1475.2,1793.3L1477.0,1794.7L1478.9,1797.2L1480.8,1798.4L1482.6,1803.5L1484.5,1804.9L1486.4,1805.1L1488.3,1809.2L1490.1,1813.2L1492.0,1812.9L1493.9,1818.6L1495.7,1825.8L1497.6,1826.0L1499.5,1825.8L1501.3,1821.8L1503.2,1830.3L1505.1,1837.4L1506.9,1844.3L1508.8,1845.9L1510.7,1843.7L1512.5,1847.1L1514.4,1853.2L1516.3,1855.9L1518.1,1862.5L1520.0,1862.6L1521.9,1864.0L1523.7,1869.6L1525.6,1876.7L1527.5,1876.2L1529.3,1880.1L1531.2,1879.9L1533.1,1886.9L1534.9,1889.3L1536.8,1894.5L1538.7,1894.5L1540.6,1901.6L1542.4,1892.1L1544.3,1891.8L1546.2,1890.8L1548.0,1884.1L1549.9,1887.4L1551.8,1884.3L1553.6,1881.2L1555.5,1875.0L1557.4,1872.4L1559.2,1868.5L1561.1,1867.5L1563.0,1863.5L1564.8,1858.5L1566.7,1852.6L1568.6,1844.5L1570.4,1838.3L1572.3,1829.5L1574.2,1823.0L1576.0,1815.2L1577.9,1804.2L1579.8,1800.3L1581.6,1790.7L1583.5,1781.1L1585.4,1770.5L1587.2,1774.6L1589.1,1763.4L1591.0,1758.7L1592.9,1756.0L1594.7,1747.6L1596.6,1749.8L1598.5,1741.4L1600.3,1733.6L1602.2,1734.3L1604.1,1725.5L1605.9,1726.3L1607.8,1716.9L1609.7,1717.4L1611.5,1711.5L1613.4,1704.0L1615.3,1703.8L1617.1,1703.8L1619.0,1696.3L1620.9,1694.9L1622.7,1694.1L1624.6,1689.6L1626.5,1685.9L1628.3,1683.0L1630.2,1683.4L1632.1,1677.9L1633.9,1675.1L1635.8,1675.3L1637.7,1672.6L1639.5,1674.8L1641.4,1666.6L1643.3,1664.7L1645.2,1665.3L1647.0,1664.5L1648.9,1664.6L1650.8,1661.5L1652.6,1660.4L1654.5,1658.6L1656.4,1656.4L1658.2,1657.5L1660.1,1657.5L1662.0,1658.9L1663.8,1657.5L1665.7,1656.0L1667.6,1655.9L1669.4,1653.7L1671.3,1656.8L1673.2,1654.9L1675.0,1655.0L1676.9,1653.8L1678.8,1658.3L1680.6,1662.1L1682.5,1661.7L1684.4,1665.8L1686.2,1665.7L1688.1,1666.6L1690.0,1672.7L1691.8,1675.8L1693.7,1680.9L1695.6,1677.7L1697.5,1684.1L1699.3,1685.6L1701.2,1687.7L1703.1,1686.9L1704.9,1685.6L1706.8,1693.7L1708.7,1695.8L1710.5,1691.2L1712.4,1696.0L1714.3,1695.2L1716.1,1698.3L1718.0,1699.3L1719.9,1700.3L1721.7,1702.5L1723.6,1707.9L1725.5,1708.1L1727.3,1715.0L1729.2,1716.6L1731.1,1723.6L1732.9,1723.9L1734.8,1730.0L1736.7,1737.7L1738.5,1737.4L1740.4,1746.0L1742.3,1746.7L1744.2,1746.6L1746.0,1753.0L1747.9,1752.4L1749.8,1756.5L1751.6,1758.1L1753.5,1763.0L1755.4,1767.2L1757.2,1765.2L1759.1,1771.3L1761.0,1770.7L1762.8,1768.1L1764.7,1768.6L1766.6,1772.5L1768.4,1768.5L1770.3,1770.0L1772.2,1765.9L1774.0,1764.4L1775.9,1764.0L1777.8,1764.7L1779.6,1763.4L1781.5,1760.2L1783.4,1759.6L1785.2,1752.0L1787.1,1753.1L1789.0,1744.6L1790.8,1737.6L1792.7,1738.6L1794.6,1733.7L1796.5,1724.7L1798.3,1725.1L1800.2,1720.1L1802.1,1719.3L1803.9,1709.5L1805.8,1704.9L1807.7,1705.0L1809.5,1699.6L1811.4,1692.2L1813.3,1691.0L1815.1,1683.8L1817.0,1681.0L1818.9,1679.1L1820.7,1667.9L1822.6,1667.4L1824.5,1658.9L1826.3,1656.9L1828.2,1651.2L1830.1,1646.3L1831.9,1641.4L1833.8,1630.1L1835.7,1636.7L1837.5,1625.3L1839.4,1623.4L1841.3,1618.6L1843.1,1611.3L1845.0,1615.4L1846.9,1608.4L1848.8,1596.6L1850.6,1601.0L1852.5,1598.2L1854.4,1586.4L1856.2,1589.0L1858.1,1582.1L1860.0,1577.0L1861.8,1569.6L1863.7,1570.2L1865.6,1563.0L1867.4,1562.7L1869.3,1563.0L1871.2,1553.8L1873.0,1559.5L1874.9,1554.3L1876.8,1555.4L1878.6,1551.4L1880.5,1551.4L1882.4,1549.6L1884.2,1549.5L1886.1,1550.3L1888.0,1550.8L1889.8,1548.5L1891.7,1550.9L1893.6,1550.6L1895.4,1549.8L1897.3,1552.5L1899.2,1553.6L1901.1,1552.4L1902.9,1554.6L1904.8,1553.8L1906.7,1553.0L1908.5,1558.1L1910.4,1558.3L1912.3,1560.3L1914.1,1560.5L1916.0,1562.8L1917.9,1563.1L1919.7,1568.0L1921.6,1567.4L1923.5,1567.6L1925.3,1570.4L1927.2,1574.3L1929.1,1572.8L1930.9,1578.5L1932.8,1578.4L1934.7,1580.5L1936.5,1578.8L1938.4,1584.8L1940.3,1590.9L1942.1,1585.7L1944.0,1589.8L1945.9,1591.0L1947.7,1591.6L1949.6,1596.1L1951.5,1599.0L1953.4,1599.6L1955.2,1598.7L1957.1,1607.0L1959.0,1608.7L1960.8,1612.7L1962.7,1614.1L1964.6,1615.7L1966.4,1617.2L1968.3,1623.5L1970.2,1623.7L1972.0,1630.3L1973.9,1630.5L1975.8,1636.4L1977.6,1644.5L1979.5,1642.2L1981.4,1642.5L1983.2,1647.8L1985.1,1654.5L1987.0,1653.9L1988.8,1655.3L1990.7,1662.9L1992.6,1662.5L1994.4,1662.7L1996.3,1661.7L1998.2,1667.4L2000.0,1667.6L2001.9,1667.6L2003.8,1668.9L2005.7,1669.1L2007.5,1664.1L2009.4,1663.8L2011.3,1665.1L2013.1,1664.2L2015.0,1658.1L2016.9,1655.9L2018.7,1656.4L2020.6,1654.4L2022.5,1652.2L2024.3,1648.7L2026.2,1645.4L2028.1,1644.2L2029.9,1639.8L2031.8,1634.2L2033.7,1628.7L2035.5,1626.4L2037.4,1620.6L2039.3,1614.1L2041.1,1605.4L2043.0,1604.4L2044.9,1596.8L2046.7,1592.3L2048.6,1587.1L2050.5,1586.0L2052.3,1573.6L2054.2,1573.4L2056.1,1566.6L2058.0,1561.2L2059.8,1556.5L2061.7,1553.7L2063.6,1543.0L2065.4,1547.0L2067.3,1535.9L2069.2,1535.5L2071.0,1525.0L2072.9,1526.3L2074.8,1517.3L2076.6,1515.9L2078.5,1512.9L2080.4,1502.2L2082.2,1501.5L2084.1,1495.1L2086.0,1494.6L2087.8,1486.2L2089.7,1485.0L2091.6,1479.1L2093.4,1477.1L2095.3,1477.5L2097.2,1477.8L2099.0,1472.3L2100.9,1471.6L2102.8,1465.2L2104.6,1464.1L2106.5,1466.0L2108.4,1459.0L2110.3,1457.1L2112.1,1453.6L2114.0,1452.8L2115.9,1453.6L2117.7,1453.5L2119.6,1449.7L2121.5,1449.8L2123.3,1450.6L2125.2,1451.8L2127.1,1453.5L2128.9,1454.5L2130.8,1454.6L2132.7,1456.7L2134.5,1458.6L2136.4,1457.3L2138.3,1455.5L2140.1,1459.8L2142.0,1457.2L2143.9,1456.4L2145.7,1460.5L2147.6,1459.5L2149.5,1460.5L2151.3,1460.4L2153.2,1459.9L2155.1,1460.8L2156.9,1468.9L2158.8,1467.3L2160.7,1471.8L2162.6,1473.1L2164.4,1473.5L2166.3,1477.9L2168.2,1480.7L2170.0,1481.9L2171.9,1481.8L2173.8,1491.2L2175.6,1490.9L2177.5,1497.7L2179.4,1497.9L2181.2,1498.9L2183.1,1504.5L2185.0,1504.0L2186.8,1508.6L2188.7,1508.9L2190.6,1513.1L2192.4,1513.9L2194.3,1517.0L2196.2,1514.5L2198.0,1520.0L2199.9,1522.9L2201.8,1527.4L2203.6,1527.4L2205.5,1531.1L2207.4,1536.3L2209.2,1538.1L2211.1,1541.9L2213.0,1544.4L2214.9,1542.1L2216.7,1546.2L2218.6,1548.6L2220.5,1553.3L2222.3,1552.1L2224.2,1551.7L2226.1,1556.9L2227.9,1557.0L2229.8,1557.1L2231.7,1562.0L2233.5,1560.7L2235.4,1560.3L2237.3,1555.5L2239.1,1555.8L2241.0,1555.7L2242.9,1552.2L2244.7,1552.8L2246.6,1556.8L2248.5,1548.4L2250.3,1550.6L2252.2,1548.4L2254.1,1544.1L2255.9,1542.9L2257.8,1539.2L2259.7,1533.2L2261.5,1528.1L2263.4,1525.9L2265.3,1522.8L2267.2,1518.7L2269.0,1514.3L2270.9,1508.7L2272.8,1507.3L2274.6,1500.1L2276.5,1498.6L2278.4,1495.0L2280.2,1487.6L2282.1,1487.6L2284.0,1477.5L2285.8,1476.4L2287.7,1468.2L2289.6,1466.2L2291.4,1455.0L2293.3,1451.4L2295.2,1445.5L2297.0,1441.6L2298.9,1434.5L2300.8,1426.7L2302.6,1420.3L2304.5,1411.6L2306.4,1401.1L2308.2,1402.2L2310.1,1392.2L2312.0,1392.8L2313.8,1384.0L2315.7,1384.2L2317.6,1384.7L2319.5,1381.2L2321.3,1375.1L2323.2,1381.4L2325.1,1370.9L2326.9,1374.6L2328.8,1369.4L2330.7,1368.1L2332.5,1366.0L2334.4,1363.8L2336.3,1362.0L2338.1,1360.5L2340.0,1360.1" stroke="#fcd45c"/>
<path d="M1407.9,1790.3L1409.8,1822.0L1411.7,1788.4L1413.5,1778.6L1415.4,1789.1L1417.3,1798.6L1419.1,1837.3L1421.0,1843.0L1422.9,1781.7L1424.7,1779.3L1426.6,1834.0L1428.5,1785.4L1430.3,1824.7L1432.2,1835.4L1434.1,1796.0L1436.0,1851.7L1437.8,1807.8L1439.7,1842.9L1441.6,1834.3L1443.4,1848.8L1445.3,1807.6L1447.2,1848.1L1449.0,1873.5L1450.9,1837.4L1452.8,1819.4L1454.6,1881.6L1456.5,1828.1L1458.4,1835.1L1460.2,1887.0L1462.1,1896.8L1464.0,1904.6L1465.8,1834.7L1467.7,1837.7L1469.6,1845.0L1471.4,1889.8L1473.3,1930.4L1475.2,1877.1L1477.0,1866.0L1478.9,1889.7L1480.8,1865.7L1482.6,1928.4L1484.5,1910.5L1486.4,1881.5L1488.3,1877.3L1490.1,1947.2L1492.0,1876.8L1493.9,1937.0L1495.7,1890.6L1497.6,1916.6L1499.5,1891.6L1501.3,1958.3L1503.2,1896.8L1505.1,1952.1L1506.9,1956.5L1508.8,1935.4L1510.7,1962.3L1512.5,1907.8L1514.4,1948.9L1516.3,1950.2L1518.1,1970.4L1520.0,1948.9L1521.9,1929.0L1523.7,1967.6L1525.6,1919.0L1527.5,1962.8L1529.3,1893.3L1531.2,1964.4L1533.1,1951.7L1534.9,1944.3L1536.8,1916.3L1538.7,1948.4L1540.6,1939.4L1542.4,1889.1L1544.3,1937.6L1546.2,1924.7L1548.0,1890.9L1549.9,1941.4L1551.8,1909.5L1553.6,1907.0L1555.5,1881.1L1557.4,1902.2L1559.2,1892.0L1561.1,1896.2L1563.0,1884.7L1564.8,1868.9L1566.7,1860.7L1568.6,1844.7L1570.4,1849.5L1572.3,1834.5L1574.2,1845.4L1576.0,1822.1L1577.9,1804.4L1579.8,1842.3L1581.6,1796.2L1583.5,1791.8L1585.4,1787.6L1587.2,1842.5L1589.1,1767.5L1591.0,1787.5L1592.9,1805.8L1594.7,1757.1L1596.6,1824.5L1598.5,1743.8L1600.3,1741.4L1602.2,1791.3L1604.1,1733.6L1605.9,1802.2L1607.8,1723.6L1609.7,1792.6L1611.5,1728.7L1613.4,1723.4L1615.3,1780.8L1617.1,1743.3L1619.0,1716.9L1620.9,1753.8L1622.7,1760.2L1624.6,1695.0L1626.5,1724.5L1628.3,1724.6L1630.2,1733.1L1632.1,1704.6L1633.9,1681.9L1635.8,1752.8L1637.7,1711.9L1639.5,1741.1L1641.4,1677.6L1643.3,1680.1L1645.2,1740.1L1647.0,1683.1L1648.9,1730.6L1650.8,1692.9L1652.6,1678.5L1654.5,1694.1L1656.4,1691.0L1658.2,1739.9L1660.1,1684.6L1662.0,1718.9L1663.8,1694.1L1665.7,1747.3L1667.6,1735.2L1669.4,1684.0L1671.3,1728.8L1673.2,1766.5L1675.0,1715.3L1676.9,1755.2L1678.8,1729.3L1680.6,1750.0L1682.5,1713.4L1684.4,1745.1L1686.2,1726.5L1688.1,1770.5L1690.0,1719.9L1691.8,1761.7L1693.7,1730.4L1695.6,1784.3L1697.5,1721.3L1699.3,1737.7L1701.2,1797.0L1703.1,1731.3L1704.9,1786.7L1706.8,1794.9L1708.7,1756.6L1710.5,1814.5L1712.4,1767.2L1714.3,1796.2L1716.1,1774.8L1718.0,1770.3L1719.9,1838.4L1721.7,1777.5L1723.6,1793.3L1725.5,1798.9L1727.3,1819.0L1729.2,1791.1L1731.1,1809.3L1732.9,1801.2L1734.8,1855.9L1736.7,1827.8L1738.5,1791.5L1740.4,1854.2L1742.3,1794.9L1744.2,1838.5L1746.0,1840.6L1747.9,1801.8L1749.8,1852.1L1751.6,1832.0L1753.5,1844.5L1755.4,1791.9L1757.2,1863.3L1759.1,1837.4L1761.0,1789.5L1762.8,1784.1L1764.7,1836.3L1766.6,1838.0L1768.4,1783.8L1770.3,1814.5L1772.2,1784.3L1774.0,1803.8L1775.9,1789.1L1777.8,1843.2L1779.6,1786.6L1781.5,1787.5L1783.4,1805.5L1785.2,1757.4L1787.1,1810.9L1789.0,1751.5L1790.8,1748.0L1792.7,1818.2L1794.6,1739.7L1796.5,1728.6L1798.3,1808.3L1800.2,1745.1L1802.1,1763.2L1803.9,1709.6L1805.8,1737.8L1807.7,1772.0L1809.5,1729.6L1811.4,1712.7L1813.3,1755.1L1815.1,1683.4L1817.0,1727.4L1818.9,1730.5L1820.7,1668.6L1822.6,1741.9L1824.5,1664.1L1826.3,1715.7L1828.2,1686.9L1830.1,1652.7L1831.9,1680.0L1833.8,1643.7L1835.7,1707.0L1837.5,1633.7L1839.4,1666.4L1841.3,1657.3L1843.1,1636.9L1845.0,1680.0L1846.9,1628.9L1848.8,1605.0L1850.6,1672.7L1852.5,1646.0L1854.4,1586.0L1856.2,1656.9L1858.1,1607.5L1860.0,1580.2L1861.8,1593.7L1863.7,1611.9L1865.6,1579.2L1867.4,1641.2L1869.3,1625.8L1871.2,1568.6L1873.0,1647.1L1874.9,1582.5L1876.8,1634.4L1878.6,1581.4L1880.5,1640.6L1882.4,1572.6L1884.2,1639.0L1886.1,1638.7L1888.0,1586.7L1889.8,1580.9L1891.7,1626.4L1893.6,1583.8L1895.4,1595.8L1897.3,1608.8L1899.2,1608.1L1901.1,1594.3L1902.9,1596.6L1904.8,1650.1L1906.7,1599.2L1908.5,1634.5L1910.4,1644.4L1912.3,1597.6L1914.1,1631.4L1916.0,1650.7L1917.9,1636.0L1919.7,1602.5L1921.6,1648.3L1923.5,1632.8L1925.3,1650.2L1927.2,1660.1L1929.1,1663.6L1930.9,1623.3L1932.8,1685.9L1934.7,1630.4L1936.5,1695.8L1938.4,1644.6L1940.3,1643.0L1942.1,1707.9L1944.0,1698.9L1945.9,1650.8L1947.7,1656.2L1949.6,1716.0L1951.5,1672.9L1953.4,1661.6L1955.2,1722.4L1957.1,1715.8L1959.0,1703.7L1960.8,1662.0L1962.7,1716.6L1964.6,1684.5L1966.4,1696.0L1968.3,1738.3L1970.2,1688.8L1972.0,1738.8L1973.9,1701.8L1975.8,1731.6L1977.6,1725.9L1979.5,1749.7L1981.4,1704.6L1983.2,1678.9L1985.1,1738.5L1987.0,1739.4L1988.8,1680.9L1990.7,1726.3L1992.6,1738.5L1994.4,1726.7L1996.3,1694.7L1998.2,1688.8L2000.0,1724.4L2001.9,1684.1L2003.8,1746.8L2005.7,1732.8L2007.5,1665.7L2009.4,1710.7L2011.3,1722.9L2013.1,1705.6L2015.0,1670.4L2016.9,1679.4L2018.7,1719.5L2020.6,1668.3L2022.5,1681.0L2024.3,1667.9L2026.2,1661.0L2028.1,1684.4L2029.9,1654.0L2031.8,1647.2L2033.7,1647.4L2035.5,1663.2L2037.4,1635.7L2039.3,1632.5L2041.1,1599.7L2043.0,1632.0L2044.9,1611.1L2046.7,1615.5L2048.6,1596.4L2050.5,1620.0L2052.3,1573.9L2054.2,1636.6L2056.1,1561.8L2058.0,1586.5L2059.8,1577.5L2061.7,1588.0L2063.6,1546.8L2065.4,1612.3L2067.3,1535.4L2069.2,1590.7L2071.0,1527.7L2072.9,1568.2L2074.8,1523.8L2076.6,1558.1L2078.5,1553.8L2080.4,1501.9L2082.2,1559.1L2084.1,1514.2L2086.0,1558.7L2087.8,1492.4L2089.7,1546.3L2091.6,1478.1L2093.4,1528.8L2095.3,1545.2L2097.2,1550.1L2099.0,1491.0L2100.9,1532.8L2102.8,1461.4L2104.6,1518.0L2106.5,1508.8L2108.4,1474.3L2110.3,1489.9L2112.1,1486.7L2114.0,1495.6L2115.9,1511.6L2117.7,1501.2L2119.6,1465.6L2121.5,1523.8L2123.3,1486.9L2125.2,1511.5L2127.1,1522.9L2128.9,1484.9L2130.8,1505.9L2132.7,1521.6L2134.5,1536.7L2136.4,1480.3L2138.3,1546.4L2140.1,1483.8L2142.0,1547.6L2143.9,1537.2L2145.7,1510.9L2147.6,1558.8L2149.5,1494.1L2151.3,1556.2L2153.2,1504.7L2155.1,1543.7L2156.9,1541.2L2158.8,1563.8L2160.7,1526.3L2162.6,1542.8L2164.4,1541.0L2166.3,1572.4L2168.2,1554.2L2170.0,1548.1L2171.9,1560.3L2173.8,1567.0L2175.6,1565.0L2177.5,1600.1L2179.4,1566.3L2181.2,1564.3L2183.1,1566.7L2185.0,1580.4L2186.8,1625.6L2188.7,1563.0L2190.6,1629.1L2192.4,1611.8L2194.3,1571.8L2196.2,1629.1L2198.0,1623.5L2199.9,1629.1L2201.8,1630.0L2203.6,1636.5L2205.5,1583.1L2207.4,1635.8L2209.2,1571.8L2211.1,1611.8L2213.0,1582.3L2214.9,1575.6L2216.7,1608.4L2218.6,1578.6L2220.5,1607.2L2222.3,1573.1L2224.2,1633.8L2226.1,1640.9L2227.9,1611.5L2229.8,1624.5L2231.7,1631.6L2233.5,1596.5L2235.4,1635.7L2237.3,1571.7L2239.1,1617.3L2241.0,1637.2L2242.9,1564.0L2244.7,1607.9L2246.6,1607.3L2248.5,1552.2L2250.3,1608.1L2252.2,1563.9L2254.1,1567.3L2255.9,1570.6L2257.8,1568.0L2259.7,1541.5L2261.5,1550.3L2263.4,1556.3L2265.3,1558.5L2267.2,1543.8L2269.0,1532.3L2270.9,1532.3L2272.8,1529.5L2274.6,1515.9L2276.5,1531.1L2278.4,1494.0L2280.2,1501.4L2282.1,1520.9L2284.0,1467.1L2285.8,1529.3L2287.7,1459.5L2289.6,1506.0L2291.4,1453.9L2293.3,1478.3L2295.2,1460.4L2297.0,1476.1L2298.9,1450.3L2300.8,1436.9L2302.6,1432.7L2304.5,1420.7L2306.4,1408.8L2308.2,1476.1L2310.1,1399.1L2312.0,1470.9L2313.8,1390.1L2315.7,1469.0L2317.6,1464.5L2319.5,1404.0L2321.3,1403.1L2323.2,1455.8L2325.1,1377.6L2326.9,1447.9L2328.8,1396.0L2330.7,1409.2L2332.5,1408.7L2334.4,1393.0L2336.3,1405.5L2338.1,1407.0L2340.0,1422.5" stroke="#67d2e2"/>
<path d="M1407.9,1790.3L1409.8,1806.2L1411.7,1800.3L1413.5,1794.8L1415.4,1793.7L1417.3,1794.5L1419.1,1800.6L1421.0,1805.9L1422.9,1803.2L1424.7,1800.8L1426.6,1803.9L1428.5,1802.3L1430.3,1804.0L1432.2,1806.3L1434.1,1805.6L1436.0,1808.5L1437.8,1808.4L1439.7,1810.3L1441.6,1811.6L1443.4,1813.5L1445.3,1814.3L1447.2,1815.6L1449.0,1819.9L1450.9,1822.8L1452.8,1824.3L1454.6,1828.5L1456.5,1828.0L1458.4,1827.6L1460.2,1832.9L1462.1,1838.8L1464.0,1842.3L1465.8,1844.8L1467.7,1845.4L1469.6,1845.9L1471.4,1850.6L1473.3,1854.5L1475.2,1858.0L1477.0,1859.1L1478.9,1861.9L1480.8,1862.8L1482.6,1868.8L1484.5,1871.9L1486.4,1872.3L1488.3,1874.3L1490.1,1880.7L1492.0,1880.5L1493.9,1885.9L1495.7,1888.7L1497.6,1890.2L1499.5,1889.9L1501.3,1892.6L1503.2,1895.7L1505.1,1901.4L1506.9,1907.0L1508.8,1909.3L1510.7,1910.9L1512.5,1912.4L1514.4,1916.6L1516.3,1919.6L1518.1,1924.8L1520.0,1925.8L1521.9,1926.8L1523.7,1931.1L1525.6,1933.2L1527.5,1933.9L1529.3,1934.8L1531.2,1936.1L1533.1,1939.2L1534.9,1940.6L1536.8,1941.8L1538.7,1941.3L1540.6,1943.4L1542.4,1940.3L1544.3,1939.3L1546.2,1938.8L1548.0,1935.2L1549.9,1936.9L1551.8,1934.9L1553.6,1932.8L1555.5,1928.3L1557.4,1926.0L1559.2,1924.1L1561.1,1920.6L1563.0,1918.8L1564.8,1914.2L1566.7,1912.5L1568.6,1906.5L1570.4,1901.4L1572.3,1895.9L1574.2,1892.4L1576.0,1886.1L1577.9,1879.3L1579.8,1877.0L1581.6,1869.9L1583.5,1863.3L1585.4,1858.1L1587.2,1853.2L1589.1,1846.1L1591.0,1840.1L1592.9,1836.3L1594.7,1829.1L1596.6,1825.7L1598.5,1818.1L1600.3,1810.9L1602.2,1807.0L1604.1,1800.7L1605.9,1798.5L1607.8,1792.3L1609.7,1790.2L1611.5,1784.3L1613.4,1779.4L1615.3,1778.2L1617.1,1773.3L1619.0,1769.3L1620.9,1767.4L1622.7,1766.0L1624.6,1758.6L1626.5,1756.5L1628.3,1753.3L1630.2,1749.7L1632.1,1747.1L1633.9,1740.0L1635.8,1740.4L1637.7,1738.9L1639.5,1736.4L1641.4,1733.6L1643.3,1727.5L1645.2,1728.3L1647.0,1722.9L1648.9,1723.0L1650.8,1721.4L1652.6,1716.3L1654.5,1713.9L1656.4,1712.6L1658.2,1711.9L1660.1,1708.1L1662.0,1709.3L1663.8,1707.8L1665.7,1708.9L1667.6,1709.0L1669.4,1708.0L1671.3,1710.3L1673.2,1711.0L1675.0,1711.2L1676.9,1711.9L1678.8,1714.5L1680.6,1718.0L1682.5,1716.6L1684.4,1719.7L1686.2,1719.5L1688.1,1723.4L1690.0,1725.5L1691.8,1728.9L1693.7,1730.8L1695.6,1733.0L1697.5,1734.9L1699.3,1735.8L1701.2,1741.0L1703.1,1740.2L1704.9,1742.7L1706.8,1748.3L1708.7,1749.7L1710.5,1752.1L1712.4,1754.7L1714.3,1756.7L1716.1,1759.0L1718.0,1760.0L1719.9,1766.3L1721.7,1767.9L1723.6,1771.2L1725.5,1772.6L1727.3,1777.6L1729.2,1779.1L1731.1,1783.0L1732.9,1783.8L1734.8,1790.6L1736.7,1795.1L1738.5,1794.8L1740.4,1801.0L1742.3,1801.4L1744.2,1803.6L1746.0,1807.8L1747.9,1807.1L1749.8,1811.4L1751.6,1813.2L1753.5,1816.6L1755.4,1817.7L1757.2,1819.0L1759.1,1822.0L1761.0,1821.8L1762.8,1821.0L1764.7,1821.9L1766.6,1824.3L1768.4,1823.0L1770.3,1823.6L1772.2,1820.1L1774.0,1818.9L1775.9,1818.7L1777.8,1818.2L1779.6,1817.8L1781.5,1815.2L1783.4,1813.5L1785.2,1811.2L1787.1,1809.2L1789.0,1805.2L1790.8,1800.3L1792.7,1801.6L1794.6,1795.5L1796.5,1790.0L1798.3,1791.0L1800.2,1789.0L1802.1,1785.4L1803.9,1778.9L1805.8,1776.6L1807.7,1774.5L1809.5,1771.8L1811.4,1767.2L1813.3,1765.5L1815.1,1757.5L1817.0,1754.6L1818.9,1751.7L1820.7,1744.9L1822.6,1744.1L1824.5,1736.8L1826.3,1735.0L1828.2,1731.9L1830.1,1723.6L1831.9,1720.7L1833.8,1716.4L1835.7,1711.3L1837.5,1705.8L1839.4,1700.9L1841.3,1698.3L1843.1,1693.3L1845.0,1688.7L1846.9,1683.6L1848.8,1678.3L1850.6,1674.1L1852.5,1672.3L1854.4,1665.2L1856.2,1661.5L1858.1,1658.5L1860.0,1650.4L1861.8,1646.9L1863.7,1641.7L1865.6,1636.3L1867.4,1635.7L1869.3,1633.0L1871.2,1629.2L1873.0,1626.3L1874.9,1623.7L1876.8,1622.1L1878.6,1618.3L1880.5,1618.5L1882.4,1613.1L1884.2,1613.6L1886.1,1615.3L1888.0,1611.0L1889.8,1607.8L1891.7,1609.8L1893.6,1606.1L1895.4,1605.5L1897.3,1607.0L1899.2,1607.7L1901.1,1606.8L1902.9,1607.7L1904.8,1608.1L1906.7,1606.8L1908.5,1610.1L1910.4,1609.9L1912.3,1610.7L1914.1,1610.5L1916.0,1614.0L1917.9,1613.8L1919.7,1615.3L1921.6,1615.7L1923.5,1615.4L1925.3,1618.6L1927.2,1622.6L1929.1,1624.4L1930.9,1626.4L1932.8,1630.9L1934.7,1632.0L1936.5,1636.4L1938.4,1638.9L1940.3,1641.2L1942.1,1644.1L1944.0,1649.1L1945.9,1649.9L1947.7,1650.5L1949.6,1656.4L1951.5,1658.5L1953.4,1659.0L1955.2,1663.4L1957.1,1669.0L1959.0,1671.8L1960.8,1673.3L1962.7,1676.6L1964.6,1677.8L1966.4,1679.4L1968.3,1685.2L1970.2,1685.3L1972.0,1690.7L1973.9,1691.0L1975.8,1695.4L1977.6,1699.5L1979.5,1701.6L1981.4,1701.9L1983.2,1703.3L1985.1,1707.4L1987.0,1708.6L1988.8,1709.0L1990.7,1712.2L1992.6,1713.0L1994.4,1713.6L1996.3,1713.1L1998.2,1714.5L2000.0,1714.9L2001.9,1714.8L2003.8,1717.4L2005.7,1717.1L2007.5,1716.0L2009.4,1714.5L2011.3,1715.6L2013.1,1714.3L2015.0,1711.5L2016.9,1708.0L2018.7,1708.8L2020.6,1708.2L2022.5,1705.4L2024.3,1701.8L2026.2,1700.8L2028.1,1698.7L2029.9,1694.5L2031.8,1690.5L2033.7,1688.1L2035.5,1686.8L2037.4,1682.4L2039.3,1679.8L2041.1,1672.5L2043.0,1667.4L2044.9,1664.7L2046.7,1659.9L2048.6,1653.6L2050.5,1649.3L2052.3,1644.5L2054.2,1642.4L2056.1,1634.5L2058.0,1630.4L2059.8,1625.2L2061.7,1621.2L2063.6,1615.5L2065.4,1611.9L2067.3,1606.0L2069.2,1603.1L2071.0,1597.2L2072.9,1592.4L2074.8,1586.8L2076.6,1583.1L2078.5,1580.8L2080.4,1574.3L2082.2,1571.7L2084.1,1566.6L2086.0,1564.7L2087.8,1558.4L2089.7,1557.0L2091.6,1549.1L2093.4,1547.4L2095.3,1545.4L2097.2,1544.0L2099.0,1539.1L2100.9,1538.4L2102.8,1530.9L2104.6,1530.0L2106.5,1525.9L2108.4,1523.3L2110.3,1519.3L2112.1,1517.5L2114.0,1514.4L2115.9,1512.2L2117.7,1512.2L2119.6,1507.5L2121.5,1508.0L2123.3,1504.4L2125.2,1505.4L2127.1,1504.2L2128.9,1504.6L2130.8,1503.4L2132.7,1502.2L2134.5,1501.6L2136.4,1501.0L2138.3,1501.7L2140.1,1502.8L2142.0,1504.3L2143.9,1505.7L2145.7,1507.6L2147.6,1511.0L2149.5,1511.4L2151.3,1514.4L2153.2,1514.1L2155.1,1516.2L2156.9,1520.0L2158.8,1522.0L2160.7,1523.9L2162.6,1525.5L2164.4,1526.4L2166.3,1530.8L2168.2,1533.2L2170.0,1534.5L2171.9,1535.7L2173.8,1540.0L2175.6,1541.0L2177.5,1546.8L2179.4,1547.7L2181.2,1549.1L2183.1,1551.9L2185.0,1552.9L2186.8,1559.5L2188.7,1559.8L2190.6,1566.1L2192.4,1569.5L2194.3,1571.0L2196.2,1574.3L2198.0,1579.1L2199.9,1583.4L2201.8,1587.9L2203.6,1591.1L2205.5,1592.5L2207.4,1596.9L2209.2,1597.5L2211.1,1599.7L2213.0,1600.6L2214.9,1599.4L2216.7,1601.5L2218.6,1602.2L2220.5,1604.2L2222.3,1603.9L2224.2,1604.3L2226.1,1608.2L2227.9,1607.3L2229.8,1607.9L2231.7,1610.9L2233.5,1609.3L2235.4,1609.9L2237.3,1607.0L2239.1,1606.4L2241.0,1606.4L2242.9,1605.5L2244.7,1604.1L2246.6,1605.8L2248.5,1602.9L2250.3,1604.2L2252.2,1603.6L2254.1,1601.5L2255.9,1601.1L2257.8,1599.2L2259.7,1597.6L2261.5,1593.4L2263.4,1589.2L2265.3,1586.5L2267.2,1582.5L2269.0,1577.5L2270.9,1574.3L2272.8,1569.0L2274.6,1566.2L2276.5,1561.9L2278.4,1554.7L2280.2,1551.6L2282.1,1547.3L2284.0,1540.2L2285.8,1539.1L2287.7,1531.7L2289.6,1528.8L2291.4,1523.1L2293.3,1518.5L2295.2,1513.1L2297.0,1509.9L2298.9,1504.9L2300.8,1498.9L2302.6,1492.6L2304.5,1486.4L2306.4,1480.3L2308.2,1477.5L2310.1,1470.9L2312.0,1468.7L2313.8,1461.6L2315.7,1460.4L2317.6,1458.5L2319.5,1452.7L2321.3,1449.5L2323.2,1445.8L2325.1,1441.7L2326.9,1438.8L2328.8,1435.9L2330.7,1432.5L2332.5,1429.9L2334.4,1425.7L2336.3,1423.5L2338.1,1422.0L2340.0,1421.5" stroke="#98dc6c"/>
</g>
<g stroke-width="2.5">
<path d="M2368 1349H2429" stroke="#67d2e2"/>
<path d="M2368 1387H2429" stroke="#98dc6c"/>
<path d="M2368 1425H2429" stroke="#fcd45c"/>
<path d="M2368 1463H2429" stroke="#c2b4fa"/>
</g>
</svg>
<div class="txt" style="left:1290px;width:100px;text-align:right;top:1935px;font-size:22px;color:#cfcfcf;-webkit-text-stroke:0.3px #cfcfcf">0</div>
<div class="txt" style="left:1290px;width:100px;text-align:right;top:1850px;font-size:22px;color:#cfcfcf;-webkit-text-stroke:0.3px #cfcfcf">100</div>
<div class="txt" style="left:1290px;width:100px;text-align:right;top:1764px;font-size:22px;color:#cfcfcf;-webkit-text-stroke:0.3px #cfcfcf">200</div>
<div class="txt" style="left:1290px;width:100px;text-align:right;top:1679px;font-size:22px;color:#cfcfcf;-webkit-text-stroke:0.3px #cfcfcf">300</div>
<div class="txt" style="left:1290px;width:100px;text-align:right;top:1594px;font-size:22px;color:#cfcfcf;-webkit-text-stroke:0.3px #cfcfcf">400</div>
<div class="txt" style="left:1290px;width:100px;text-align:right;top:1508px;font-size:22px;color:#cfcfcf;-webkit-text-stroke:0.3px #cfcfcf">500</div>
<div class="txt" style="left:1290px;width:100px;text-align:right;top:1423px;font-size:22px;color:#cfcfcf;-webkit-text-stroke:0.3px #cfcfcf">600</div>
<div class="txt" style="left:1290px;width:100px;text-align:right;top:1338px;font-size:22px;color:#cfcfcf;-webkit-text-stroke:0.3px #cfcfcf">700</div>
<div class="txt" style="left:1475px;width:200px;text-align:center;top:2053px;font-size:22px;color:#cfcfcf;-webkit-text-stroke:0.3px #cfcfcf">15:00</div>
<div class="txt" style="left:1475px;width:200px;text-align:center;top:2084px;font-size:22px;color:#cfcfcf;-webkit-text-stroke:0.3px #cfcfcf">Jan 13, 2023</div>
<div class="txt" style="left:1643px;width:200px;text-align:center;top:2053px;font-size:22px;color:#cfcfcf;-webkit-text-stroke:0.3px #cfcfcf">18:00</div>
<div class="txt" style="left:1810px;width:200px;text-align:center;top:2053px;font-size:22px;color:#cfcfcf;-webkit-text-stroke:0.3px #cfcfcf">21:00</div>
<div class="txt" style="left:1978px;width:200px;text-align:center;top:2053px;font-size:22px;color:#cfcfcf;-webkit-text-stroke:0.3px #cfcfcf">00:00</div>
<div class="txt" style="left:1978px;width:200px;text-align:center;top:2084px;font-size:22px;color:#cfcfcf;-webkit-text-stroke:0.3px #cfcfcf">Jan 14, 2023</div>
<div class="txt" style="left:2148px;width:200px;text-align:center;top:2053px;font-size:22px;color:#cfcfcf;-webkit-text-stroke:0.3px #cfcfcf">03:00</div>

<div class="txt" style="left:2440px;top:1339px;font-size:23px;color:#f0f0f0">Price</div>
<div class="txt" style="left:2440px;top:1377px;font-size:23px;color:#f0f0f0">AvgPrice</div>
<div class="txt" style="left:2440px;top:1415px;font-size:23px;color:#f0f0f0">Upper</div>
<div class="txt" style="left:2440px;top:1453px;font-size:23px;color:#f0f0f0">Lower</div>

<!-- ===== ANNOTATION BOXES ===== -->
<div class="ann" style="left:2130px;top:172px;width:200px;height:63px;border-color:#bb4427"></div>
<div class="ann" style="left:2330px;top:172px;width:170px;height:63px;border-color:#0505d4"></div>
<div class="ann" style="left:2500px;top:172px;width:64px;height:63px;border-color:#1ee6a0"></div>
<div class="ann" style="left:2px;top:236px;width:122px;height:58px;border-color:#c60000"></div>
<div class="ann" style="left:124px;top:236px;width:110px;height:58px;border-color:#7b3a9f"></div>
<div class="ann" style="left:1856px;top:236px;width:162px;height:54px;border-color:#70aefb"></div>
<div class="ann" style="left:2018px;top:236px;width:244px;height:54px;border-color:#fbbb03"></div>
<div class="ann" style="left:1686px;top:290px;width:120px;height:66px;border-color:#00ee1c"></div>
<div class="ann" style="left:1806px;top:290px;width:40px;height:66px;border-color:#e600e8"></div>
<div class="ann" style="left:2px;top:1194px;width:2562px;height:68px;border-color:#c27ff8"></div>
<div class="ann" style="left:2px;top:1262px;width:138px;height:54px;border-color:#4763d8"></div>
<div class="ann" style="left:2px;top:1316px;width:138px;height:358px;border-color:#c0507a"></div>
<div class="ann" style="left:1216px;top:1262px;width:67px;height:55px;border-color:#117a11"></div>
<div class="ann" style="left:1283px;top:1262px;width:1281px;height:62px;border-color:#e88b00"></div>


</div>
<div id="frame"></div>
</body></html>
